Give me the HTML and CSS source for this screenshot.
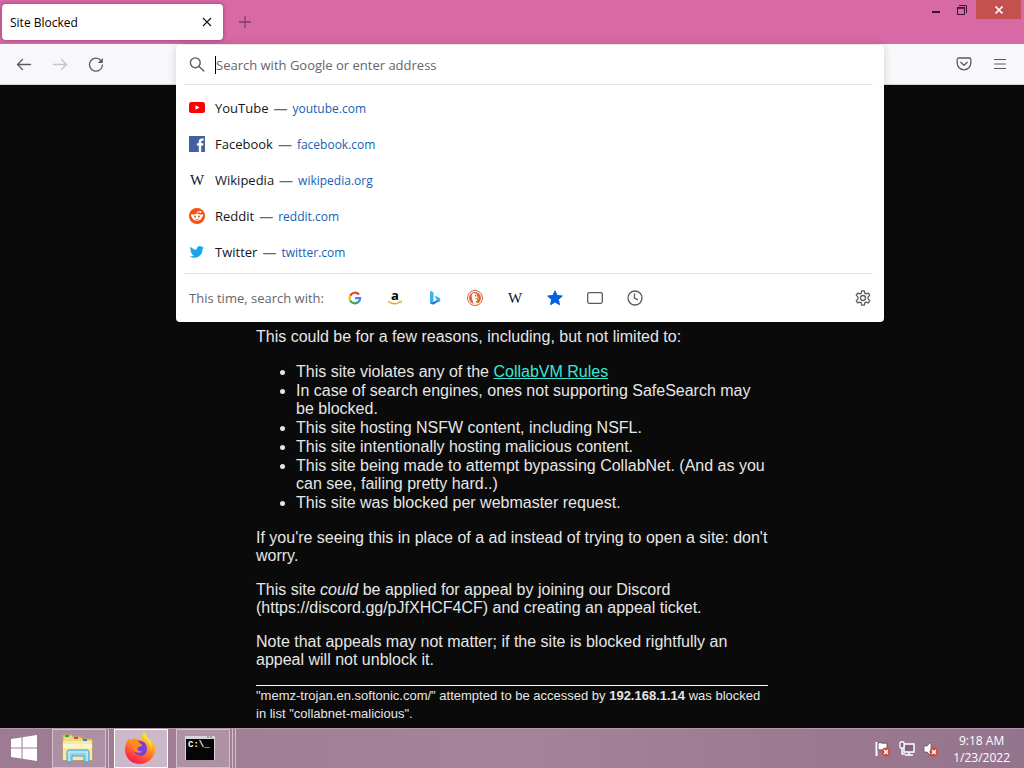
FILE: index.html
```html
<!DOCTYPE html>
<html lang="en">
<head>
<meta charset="utf-8">
<meta name="viewport" content="width=device-width, initial-scale=1">
<title>Site Blocked</title>
<link rel="stylesheet" href="styles.css">
</head>
<body>
<header class="titlebar">
  <div class="tab">
    <span class="tab-title">Site Blocked</span>
    <button class="icon-btn tab-close" aria-label="Close tab"><svg width="10" height="10" viewBox="0 0 10 10" fill="none" stroke="#15141a" stroke-width="1.1"><path d="M1 1l8 8M9 1L1 9"/></svg></button>
  </div>
  <button class="icon-btn new-tab" aria-label="New tab"><svg width="12" height="12" viewBox="0 0 12 12" fill="none" stroke="#7d4068" stroke-width="1.3"><path d="M6 0v12M0 6h12"/></svg></button>
  <div class="window-controls">
    <button class="win-btn" aria-label="Minimize"><svg width="10" height="10" viewBox="0 0 10 10"><path d="M1 6h8v2H1z" fill="#3a1030"/></svg></button>
    <button class="win-btn" aria-label="Restore"><svg width="12" height="12" viewBox="0 0 12 12" fill="none" stroke="#3a1030"><path d="M1.500 4h7v6.500h-7z"/><path d="M1 3.800h8" stroke-width="1.500"/><path d="M3 1.500h7.500V9"/></svg></button>
    <button class="win-btn win-close" aria-label="Close window"><svg width="10" height="10" viewBox="0 0 10 10" fill="none" stroke="#fff" stroke-width="1.700"><path d="M1.500 1.500l7 7M8.500 1.500l-7 7"/></svg></button>
  </div>
</header>

<nav class="toolbar" aria-label="Navigation">
  <button class="icon-btn tool-btn" aria-label="Back"><svg width="16" height="16" viewBox="0 0 16 16" fill="none" stroke="#5b5b66" stroke-width="1.300" stroke-linecap="round" stroke-linejoin="round"><path d="M14.500 8.500h-13M6.500 3.500l-5 5 5 5"/></svg></button>
  <button class="icon-btn tool-btn" aria-label="Forward" disabled><svg width="16" height="16" viewBox="0 0 16 16" fill="none" stroke="#c3c3c9" stroke-width="1.300" stroke-linecap="round" stroke-linejoin="round"><path d="M1.500 8.500h13M9.500 3.500l5 5-5 5"/></svg></button>
  <button class="icon-btn tool-btn" aria-label="Reload"><svg width="16" height="16" viewBox="0 0 16 16" fill="none" stroke="#5b5b66" stroke-width="1.300" stroke-linecap="round"><path d="M13 4.500A6.500 6.500 0 1 0 14.500 9"/><path d="M14.800 2v5H9.800z" fill="#5b5b66" stroke="none"/></svg></button>
  <button class="icon-btn tool-btn tool-end" aria-label="Save to Pocket"><svg width="16" height="16" viewBox="0 0 16 16" fill="none" stroke="#5b5b66" stroke-width="1.300" stroke-linecap="round" stroke-linejoin="round"><path d="M2.800 2h10.400c.9 0 1.600.7 1.600 1.500V7c0 3.800-3 6.800-6.800 6.800S1.200 10.800 1.200 7V3.500C1.200 2.700 1.900 2 2.800 2z"/><path d="M4.800 6.200L8 9.200l3.200-3"/></svg></button>
  <button class="icon-btn tool-btn" aria-label="Menu"><svg width="12" height="12" viewBox="0 0 12 12" fill="none" stroke="#5b5b66" stroke-width="1.200"><path d="M0 1.500h12M0 6h12M0 10.500h12"/></svg></button>

  <section class="urlbar" aria-label="Address bar suggestions">
    <div class="urlbar-entry">
      <svg class="lead-icon" width="16" height="16" viewBox="0 0 16 16" fill="none" stroke="#5b5b66" stroke-width="1.400" stroke-linecap="round"><circle cx="6.300" cy="5.800" r="4.900"/><path d="M10 9.500l4.800 4.600"/></svg>
      <div class="field"><input class="urlbar-input" type="text" aria-label="Search with Google or enter address" placeholder="Search with Google or enter address"></div>
    </div>
    <ul class="results">
      <li><a class="result" href="#youtube"><svg class="lead-icon" width="16" height="16" viewBox="0 0 16 16"><rect y="2" width="16" height="11" rx="2.500" fill="#f00"/><path d="M6.500 5.200v4.600l4-2.300z" fill="#fff"/></svg><span class="name">YouTube</span><span class="dash">—</span><span class="site">youtube.com</span></a></li>
      <li><a class="result" href="#facebook"><svg class="lead-icon" width="16" height="16" viewBox="0 0 16 16"><path d="M0 0h16v16H0z" fill="#4460a0"/><path d="M9.800 16V9.600H7.900V7.200h1.900V5.500c0-2 1.200-3.100 3-3.100.9 0 1.600.1 1.800.1v2.200h-1.200c-1 0-1.200.5-1.200 1.200v1.300h2.300l-.3 2.400h-2V16z" fill="#fff"/></svg><span class="name">Facebook</span><span class="dash">—</span><span class="site">facebook.com</span></a></li>
      <li><a class="result" href="#wikipedia"><span class="lead-icon wiki">W</span><span class="name">Wikipedia</span><span class="dash">—</span><span class="site">wikipedia.org</span></a></li>
      <li><a class="result" href="#reddit"><svg class="lead-icon" width="16" height="16" viewBox="0 0 16 16"><circle cx="8" cy="8" r="8" fill="#f4500f"/><path d="M8 6.500l.8-3 2.200.6" fill="none" stroke="#fff" stroke-width=".8"/><circle cx="11.300" cy="3.900" r="1" fill="#fff"/><circle cx="3.300" cy="7.700" r="1.400" fill="#fff"/><circle cx="12.700" cy="7.700" r="1.400" fill="#fff"/><ellipse cx="8" cy="9.300" rx="4.900" ry="3.500" fill="#fff"/><circle cx="6" cy="8.600" r="1" fill="#f4500f"/><circle cx="10" cy="8.600" r="1" fill="#f4500f"/><path d="M6 10.900c1 .8 3 .8 4 0" fill="none" stroke="#f4500f" stroke-width=".7"/></svg><span class="name">Reddit</span><span class="dash">—</span><span class="site">reddit.com</span></a></li>
      <li><a class="result" href="#twitter"><svg class="lead-icon" width="16" height="16" viewBox="0 0 24 24"><path fill="#1ba5e8" d="M22.500 5.200c-.8.400-1.600.6-2.500.7.900-.5 1.600-1.400 1.900-2.400-.8.500-1.800.9-2.800 1.100a4.400 4.400 0 0 0-7.500 4C8 8.400 4.800 6.700 2.600 4c-1.200 2.100-.6 4.600 1.400 5.900-.7 0-1.400-.2-2-.5 0 2.100 1.500 4 3.500 4.400-.6.200-1.300.2-2 .1.600 1.700 2.200 3 4.100 3A8.900 8.900 0 0 1 1 18.700a12.500 12.500 0 0 0 6.800 2c8.200 0 12.800-7 12.500-13.200.9-.6 1.600-1.400 2.200-2.300z"/></svg><span class="name">Twitter</span><span class="dash">—</span><span class="site">twitter.com</span></a></li>
    </ul>
    <div class="engines">
      <span class="engines-label">This time, search with:</span>
      <div class="engine-list">
        <button class="icon-btn engine" aria-label="Google"><svg width="14" height="14" viewBox="0 0 14 14" fill="none" stroke-width="2.200"><path d="M2.200 4.800A5.200 5.200 0 0 1 11 3.600" stroke="#ea4335"/><path d="M2.200 4.700a5.200 5.200 0 0 0 0 4.800" stroke="#fbbc05"/><path d="M2.200 9.400a5.200 5.200 0 0 0 8.200 1.500" stroke="#34a853"/><path d="M7 7.100h5.200c0 1.700-.7 3-2 4" stroke="#4285f4"/></svg></button>
        <button class="icon-btn engine" aria-label="Amazon"><svg width="16" height="20" viewBox="0 0 16 20" fill="none"><text x="4" y="12" class="amazon-letter">a</text><path d="M1 13.200c4 3.200 8.500 3.200 12.200.8" stroke="#f5a11a" stroke-width="1.400"/><path d="M12.300 13.300l2.300-.2-.5 2.200" stroke="#f5a11a"/></svg></button>
        <button class="icon-btn engine" aria-label="Bing"><svg width="16" height="16" viewBox="0 0 16 16"><path d="M3 1.500q0-.8.900-.4l2 .9q.6.300.6 1v8.500L3 13.500z" fill="#35b5f1"/><path d="M3 12.500q1.500 3 4.500 1.500l4.500-2.700q1.500-1 1.300-3L6.500 12z" fill="#1b79e2"/><path d="M7.500 5.500l3.700 1.700q2.400 1.200 2 3.500-.4 1.500-1.500 1.300L9.500 9.500z" fill="#39b2ec"/></svg></button>
        <button class="icon-btn engine" aria-label="DuckDuckGo"><svg width="16" height="16" viewBox="0 0 16 16"><circle cx="8" cy="8" r="7.500" fill="#fff" stroke="#dc5b36"/><circle cx="8" cy="8" r="6" fill="#dc6438"/><path d="M6.500 13.600C5.800 10 4 6.500 5 4.500c1-2 4.500-1.600 5.200.7.400 1.600.2 2.500-.3 3.600l.6 4.600c-1.200.8-2.800.8-4 .2z" fill="#fff"/><circle cx="8.700" cy="5.800" r=".7" fill="#345"/><path d="M8 8l4-.8-.6 2-3.400.2z" fill="#f6b92c"/><path d="M9 10.700l2.300.2v2L9 12.300z" fill="#5b9c37"/></svg></button>
        <button class="icon-btn engine" aria-label="Wikipedia"><span class="wiki">W</span></button>
        <button class="icon-btn engine" aria-label="Bookmarks"><svg width="16" height="16" viewBox="0 0 16 16"><path d="M8 .8l2.100 4.700 5.200.5-3.900 3.500 1.100 5.200L8 12l-4.500 2.700 1.100-5.200L.7 6l5.200-.5z" fill="#0560dd" stroke="#0560dd" stroke-linejoin="round"/></svg></button>
        <button class="icon-btn engine" aria-label="Tabs"><svg width="16" height="16" viewBox="0 0 16 16" fill="none" stroke="#5b5b66" stroke-width="1.300"><rect x=".7" y="2.700" width="14.600" height="10.600" rx="1.500"/></svg></button>
        <button class="icon-btn engine" aria-label="History"><svg width="16" height="16" viewBox="0 0 16 16" fill="none" stroke="#5b5b66" stroke-width="1.300" stroke-linecap="round"><circle cx="8" cy="8" r="7"/><path d="M7.500 4v4.200l3 1.500"/></svg></button>
      </div>
      <button class="icon-btn settings" aria-label="Search settings"><svg width="16" height="16" viewBox="0 0 16 16" fill="none" stroke="#5b5b66" stroke-width="1.300" stroke-linejoin="round"><path d="M6.700.8h2.600l.5 2.300 1.300.8 2.300-.8 1.300 2.300-1.700 1.700v1.800l1.700 1.700-1.300 2.300-2.300-.8-1.300.8-.5 2.300H6.700l-.5-2.300-1.300-.8-2.300.8-1.300-2.300L3 8.900V7.100L1.300 5.400l1.300-2.300 2.300.8 1.300-.8z"/><circle cx="8" cy="8" r="2.500"/></svg></button>
    </div>
  </section>
</nav>

<main class="page">
  <article class="notice">
    <p>This could be for a few reasons, including, but not limited to:</p>
    <ul class="reasons">
      <li>This site violates any of the <a class="rules-link" href="#rules">CollabVM Rules</a></li>
      <li>In case of search engines, ones not supporting SafeSearch may be blocked.</li>
      <li>This site hosting NSFW content, including NSFL.</li>
      <li>This site intentionally hosting malicious content.</li>
      <li>This site being made to attempt bypassing CollabNet. (And as you can see, failing pretty hard..)</li>
      <li>This site was blocked per webmaster request.</li>
    </ul>
    <p>If you're seeing this in place of a ad instead of trying to open a site: don't worry.</p>
    <p>This site <em>could</em> be applied for appeal by joining our Discord (https://discord.gg/pJfXHCF4CF) and creating an appeal ticket.</p>
    <p>Note that appeals may not matter; if the site is blocked rightfully an appeal will not unblock it.</p>
    <footer class="details">"memz-trojan.en.softonic.com/" attempted to be accessed by <strong>192.168.1.14</strong> was blocked in list "collabnet-malicious".</footer>
  </article>
</main>

<footer class="taskbar">
  <button class="task start" aria-label="Start"><svg width="28" height="26" viewBox="0 0 28 26" fill="#fff"><path d="M1 4l10.500-1.600v10.100H1zM12.500 2.200L27 0v12.500H12.500zM1 13.500h10.500v10.100L1 22zM12.500 13.500H27V26l-14.500-2.200z"/></svg></button>
  <button class="task window stacked" aria-label="File Explorer"><svg width="32" height="32" viewBox="0 0 32 32"><path d="M2 3h8l1 2h8l1 2h9q1 0 1 1v20H1V4q0-1 1-1z" fill="#ecd781" stroke="#c9ad55"/><path d="M3 3h4v2H3z" fill="#3a9a48"/><path d="M12 5h4v2h-4z" fill="#d84a38"/><path d="M21 7h4v2h-4z" fill="#3c82c8"/><path d="M1 9h29v19H1z" fill="#f7e8a4"/><path d="M1 12h29v4H1z" fill="#fff5c8"/><path d="M5 30V20q0-2 2-2h18q2 0 2 2v10h-5v-6H10v6z" fill="#8fd2ef" stroke="#4ba2cf"/><path d="M6 20h20M7 20v9M25 20v9" stroke="#d8f3fc" fill="none"/></svg></button>
  <button class="task window active" aria-label="Firefox"><svg width="32" height="32" viewBox="0 0 32 32"><defs><linearGradient id="fire" x1=".8" y1=".05" x2=".3" y2="1"><stop offset="0" stop-color="#ffe34b"/><stop offset=".4" stop-color="#ff9a22"/><stop offset=".75" stop-color="#ff4a38"/><stop offset="1" stop-color="#ef1964"/></linearGradient></defs><path d="M20 0c2 2 3 4 3.500 6 3 1.500 5 4 5.500 7l1.500-2C34 22 26 32 16 32 7 32 .5 25.500 1 16.500 1.200 12 3 8.500 5.500 6l.5 3c2-2.500 4.500-3 6.500-2.500C14.500 7 17 8 18 8c-1-3 0-6 2-8z" fill="url(#fire)"/><path d="M11 9c6-2 12 1 12 7.500S18 25 14 23c-4-1.500-5-6-2-8l4-1c0-2-3-2-5-5z" fill="#7a3fe0"/><path d="M5.500 9c4-3 8-2 9.500 1 1 2 3 2 3.500 3-1 2-4 1.500-5 3-1 2 2 4 5 3-2 3-7 2-9-1-1-3 0-5-4-9z" fill="#ff8a1d"/><path d="M20 0c2 2 3 4 3.500 6 4 3 5 8 3.500 12 0-5-2-8-5-10-2-2-3-5-2-8z" fill="#ffda3e"/></svg></button>
  <button class="task window stacked triple" aria-label="Command Prompt"><svg width="30" height="26" viewBox="0 0 30 26"><path d="M0 1h30v24H0z" fill="#d8d4dc"/><path d="M1 4h28v21H1z" fill="#050505"/><path d="M22 2h2M25 2h2" stroke="#776666"/><text x="3" y="12" class="prompt-text">C:\_</text></svg></button>
  <div class="tray">
    <svg width="16" height="16" viewBox="0 0 16 16"><path d="M1.500 1v14" stroke="#fff" stroke-width="2"/><path d="M3 2c3-1 4 1 9 0v7c-4 1-6-1-9 0z" fill="#fff" stroke="#493543" stroke-width=".7"/><circle cx="11" cy="11" r="4.500" fill="#cf4a3d"/><path d="M9 9l4 4M13 9l-4 4" stroke="#fff" stroke-width="1.500"/></svg>
    <svg width="16" height="16" viewBox="0 0 16 16"><path d="M5 3h10v8H5z" fill="#7e6578" stroke="#fff" stroke-width="1.500"/><path d="M10 11v3M6 14h8M3 7v6h3" fill="none" stroke="#fff" stroke-width="1.500"/><rect x="1" y="1" width="4" height="6" rx="1" fill="#7e6578" stroke="#fff" stroke-width="1.300"/></svg>
    <svg width="16" height="16" viewBox="0 0 16 16"><path d="M1 5h3l4-4v14l-4-4H1z" fill="#fff" stroke="#493543" stroke-width=".6"/><circle cx="11" cy="11" r="4.500" fill="#cf4a3d"/><path d="M9 9l4 4M13 9l-4 4" stroke="#fff" stroke-width="1.500"/></svg>
    <div class="clock"><time>9:18 AM</time><time>1/23/2022</time></div>
  </div>
</footer>
</body>
</html>
```
FILE: styles.css
```css
* { box-sizing: border-box; }

body {
  margin: 0;
  height: 100vh;
  display: flex;
  flex-direction: column;
  overflow: hidden;
  background: #0a0a0a;
  font-family: "Open Sans", "Noto Sans", sans-serif;
  font-size: 13px;
  color: #15141a;
}

button { font: inherit; }

.icon-btn,
.win-btn {
  display: flex;
  align-items: center;
  justify-content: center;
  padding: 0;
  border: 0;
  background: none;
}

/* Title bar */
.titlebar {
  flex: none;
  height: 44px;
  display: flex;
  align-items: flex-start;
  background: #d769a4;
}

.tab {
  width: 221px;
  height: 36px;
  margin: 4px 0 0 2px;
  padding: 0 8px;
  display: flex;
  align-items: center;
  justify-content: space-between;
  border-radius: 4px;
  background: #fff;
  box-shadow: 0 0 4px rgba(80, 20, 60, 0.5);
}

.tab-title { font-size: 12px; color: #000; }
.tab-close { width: 16px; height: 16px; }
.new-tab { width: 32px; height: 36px; margin: 4px 0 0 6px; }

.window-controls { display: flex; margin-left: auto; padding-right: 3px; }
.win-btn { width: 26px; height: 19px; }
.win-close { width: 45px; margin-left: 1px; background: #c4504f; }

/* Toolbar */
.toolbar {
  flex: none;
  position: relative;
  height: 41px;
  display: flex;
  align-items: center;
  gap: 4px;
  padding: 0 8px;
  background: #f8f8fa;
  border-bottom: 1px solid #d4d4d8;
}

.tool-btn { width: 32px; height: 32px; }
.tool-end { margin-left: auto; }

/* Address bar with its open panel */
.urlbar {
  position: absolute;
  z-index: 1;
  top: 1px;
  left: 176px;
  right: 140px;
  padding: 0 11px 0 8px;
  border-radius: 4px;
  background: #fff;
  box-shadow: 0 0 10px rgba(0, 0, 0, 0.15);
}

.urlbar-entry {
  display: flex;
  align-items: center;
  gap: 10px;
  height: 40px;
  padding-left: 5px;
  border-bottom: 1px solid #e6e6e9;
}

.lead-icon { flex: none; width: 16px; }

.field { flex: 1; border-left: 1px solid #000; }

.urlbar-input {
  display: block;
  width: 100%;
  height: 18px;
  padding: 0;
  border: 0;
  outline: 0;
  background: none;
  font: inherit;
}
.urlbar-input::placeholder { color: #66656d; opacity: 1; }

.results { list-style: none; margin: 0; padding: 5px 0 3px; }

.result {
  display: flex;
  align-items: center;
  height: 36px;
  padding-left: 5px;
  color: #15141a;
  text-decoration: none;
}
.name { margin-left: 10px; }
.dash { margin: 0 5px; font-size: 14px; color: #66656d; }
.site { font-size: 12px; color: #1560b5; }

.wiki {
  font-family: "Liberation Serif", serif;
  font-size: 15px;
  color: #15141a;
  text-align: center;
}

.engines {
  display: flex;
  align-items: center;
  height: 49px;
  padding-left: 5px;
  border-top: 1px solid #e6e6e9;
}
.engines-label { color: #66656d; }
.engine-list { display: flex; gap: 8px; margin-left: 15px; }
.engine { width: 32px; height: 32px; }
.settings { width: 16px; height: 32px; margin: 0 2px 0 auto; }
.amazon-letter { font: bold 13px "Open Sans", sans-serif; fill: #000; }

/* Blocked-site page */
.page {
  flex: 1;
  min-height: 0;
  overflow: hidden;
  padding-top: 243px;
  font: 16px/18px "Liberation Sans", Arial, sans-serif;
  color: #e6e6e6;
}

.notice { width: 50%; margin: 0 auto; }
.notice p { margin: 0 0 16px; }
.notice .reasons { margin: 17px 0; padding-left: 40px; }
.reasons li { margin-bottom: 1px; }
.rules-link { color: #3ce6d4; }

.details {
  padding-top: 1px;
  border-top: 1px solid #fff;
  font-size: 13px;
}

/* Taskbar */
.taskbar {
  flex: none;
  display: flex;
  height: 40px;
  border-top: 1px solid #b497aa;
  background: linear-gradient(90deg, #9d7c93, #a58398 50%, #94748c);
}

.task {
  display: flex;
  align-items: center;
  justify-content: center;
  padding: 0 0 2px;
  border: 0;
  background: none;
}
.start { width: 48px; }

.window {
  width: 54px;
  margin-left: 4px;
  padding-right: 2px;
  border: 1px solid #d3c1ce;
  background: rgba(255, 255, 255, 0.15);
}
.active { margin-left: 8px; border-color: #fff; background: #cbb8c8; }
.stacked { box-shadow: 2px 0 0 #a18096, 3px 0 0 #d3c1ce; }
.triple {
  margin-left: 8px;
  padding-right: 6px;
  box-shadow: 2px 0 0 #a18096, 3px 0 0 #d3c1ce, 5px 0 0 #a18096, 6px 0 0 #d3c1ce;
}
.prompt-text { font: bold 9px "Liberation Mono", monospace; fill: #fff; }

.tray {
  display: flex;
  align-items: center;
  gap: 8px;
  margin-left: auto;
  padding-right: 14px;
  color: #fff;
}
.clock {
  display: flex;
  flex-direction: column;
  align-items: center;
  margin-left: 6px;
  font-size: 12px;
  line-height: 17px;
}
```
